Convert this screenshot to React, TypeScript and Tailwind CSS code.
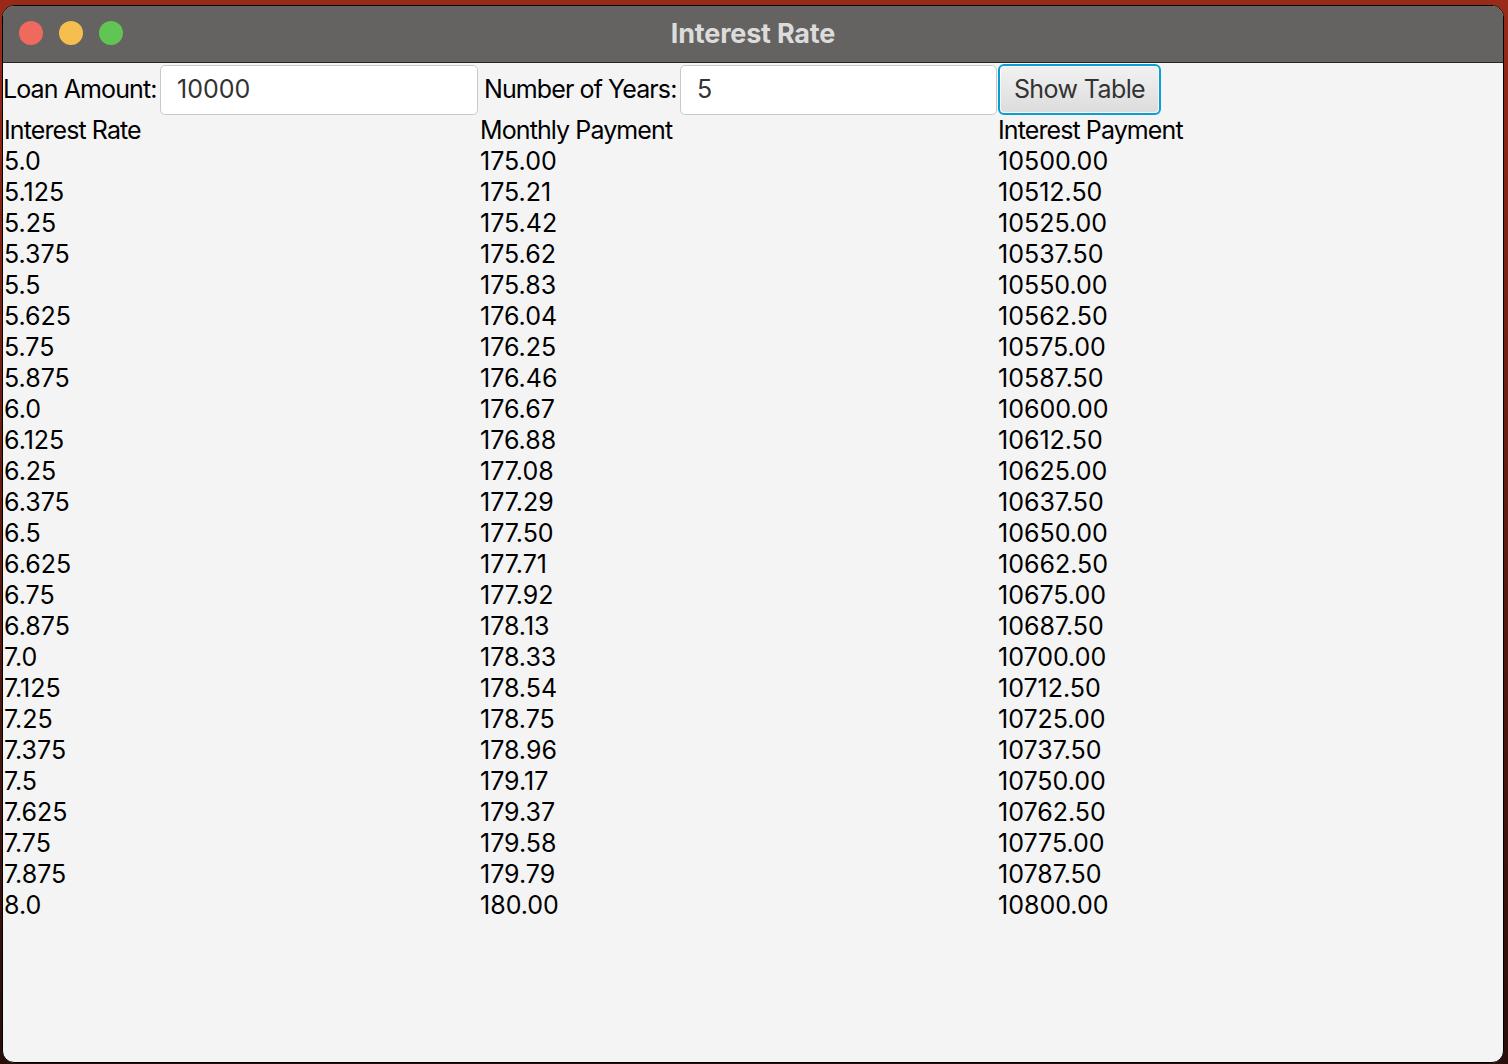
import React from "react";

const rates = [
  "5.0", "5.125", "5.25", "5.375", "5.5", "5.625", "5.75", "5.875",
  "6.0", "6.125", "6.25", "6.375", "6.5", "6.625", "6.75", "6.875",
  "7.0", "7.125", "7.25", "7.375", "7.5", "7.625", "7.75", "7.875", "8.0",
];

const monthly = [
  "175.00", "175.21", "175.42", "175.62", "175.83", "176.04", "176.25", "176.46",
  "176.67", "176.88", "177.08", "177.29", "177.50", "177.71", "177.92", "178.13",
  "178.33", "178.54", "178.75", "178.96", "179.17", "179.37", "179.58", "179.79", "180.00",
];

const totals = [
  "10500.00", "10512.50", "10525.00", "10537.50", "10550.00", "10562.50", "10575.00", "10587.50",
  "10600.00", "10612.50", "10625.00", "10637.50", "10650.00", "10662.50", "10675.00", "10687.50",
  "10700.00", "10712.50", "10725.00", "10737.50", "10750.00", "10762.50", "10775.00", "10787.50", "10800.00",
];

const font = { fontFamily: "Inter, 'Noto Sans', sans-serif" };

const TitleBar = () => (
  <div className="relative flex h-[57px] shrink-0 items-center justify-center border-b border-[#262626] bg-[#656361]">
    <div className="absolute left-[16px] top-[15px] flex gap-[16px]">
      <span className="h-[24px] w-[24px] rounded-full bg-[#ee6a5f]" />
      <span className="h-[24px] w-[24px] rounded-full bg-[#f5be4f]" />
      <span className="h-[24px] w-[24px] rounded-full bg-[#61c554]" />
    </div>
    <span className="text-[27px] font-bold tracking-[-0.2px] text-[#dcdcdc]">Interest Rate</span>
  </div>
);

const Field = ({ value, width }: { value: string; width: string }) => (
  <div
    className={`${width} flex h-[50px] items-center rounded-[5px] border border-[#c9c9c9] bg-white pl-[16px] text-[25px] text-[#333]`}
  >
    {value}
  </div>
);

export default function App() {
  return (
    <div
      className="h-[1064px] w-[1508px] overflow-hidden bg-gradient-to-b from-[#9a2a18] to-[#2a0e0a] pl-[2px] pt-[5px]"
      style={font}
    >
      <div className="flex h-[1058px] w-[1502px] flex-col overflow-hidden rounded-[12px] border border-black bg-[#f4f4f4]">
        <TitleBar />

        <div className="flex h-[52px] items-center pt-[1px]">
          <div className="w-[157px] whitespace-nowrap text-[25px] tracking-[-0.9px] text-black">Loan Amount:</div>
          <Field value="10000" width="w-[318px]" />
          <div className="w-[202px] whitespace-nowrap pl-[6px] text-[25px] tracking-[-0.9px] text-black">
            Number of Years:
          </div>
          <Field value="5" width="w-[317px]" />
          <button className="ml-[1px] flex h-[51px] w-[163px] items-center justify-center whitespace-nowrap rounded-[6px] border-[2px] border-[#0a9fd4] bg-gradient-to-b from-[#f2f2f2] to-[#dcdcdc] text-[25px] tracking-[-0.6px] text-[#333] shadow-[inset_0_0_0_1px_#ffffff]">
            Show Table
          </button>
        </div>

        <div className="grid grid-cols-[476px_518px_1fr] pl-[1px] text-[25px] leading-[31px] text-black">
          <div className="whitespace-nowrap tracking-[-0.9px]">Interest Rate</div>
          <div className="whitespace-nowrap tracking-[-0.9px]">Monthly Payment</div>
          <div className="whitespace-nowrap tracking-[-0.9px]">Interest Payment</div>
          {rates.map((r, i) => (
            <React.Fragment key={r}>
              <div>{r}</div>
              <div>{monthly[i]}</div>
              <div>{totals[i]}</div>
            </React.Fragment>
          ))}
        </div>
      </div>
    </div>
  );
}
